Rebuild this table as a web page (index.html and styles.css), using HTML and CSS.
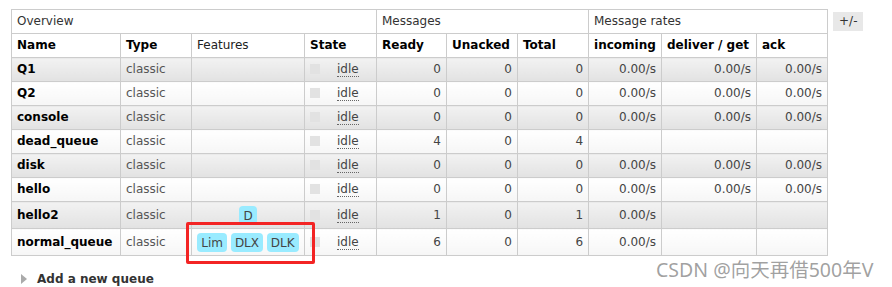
FILE: index.html
```html
<!DOCTYPE html>
<html>
<head>
<meta charset="utf-8">
<link rel="stylesheet" href="styles.css">
</head>
<body>
<div class="page">
  <div class="top">
    <table class="queues">
      <colgroup>
        <col class="c-name"><col class="c-type"><col class="c-feat"><col class="c-state">
        <col class="c-num"><col class="c-num2"><col class="c-num2">
        <col class="c-in"><col class="c-del"><col class="c-ack">
      </colgroup>
      <thead>
        <tr class="group">
          <th colspan="4">Overview</th>
          <th colspan="3">Messages</th>
          <th colspan="3">Message rates</th>
        </tr>
        <tr class="cols">
          <th>Name</th><th>Type</th><th class="light">Features</th><th>State</th>
          <th>Ready</th><th>Unacked</th><th>Total</th>
          <th>incoming</th><th>deliver / get</th><th>ack</th>
        </tr>
      </thead>
      <tbody>
        <tr class="alt1">
          <td class="name">Q1</td><td>classic</td><td></td>
          <td class="state"><span class="sq"></span><abbr>idle</abbr></td>
          <td class="r">0</td><td class="r">0</td><td class="r">0</td>
          <td class="r">0.00/s</td><td class="r">0.00/s</td><td class="r">0.00/s</td>
        </tr>
        <tr class="alt2">
          <td class="name">Q2</td><td>classic</td><td></td>
          <td class="state"><span class="sq"></span><abbr>idle</abbr></td>
          <td class="r">0</td><td class="r">0</td><td class="r">0</td>
          <td class="r">0.00/s</td><td class="r">0.00/s</td><td class="r">0.00/s</td>
        </tr>
        <tr class="alt1">
          <td class="name">console</td><td>classic</td><td></td>
          <td class="state"><span class="sq"></span><abbr>idle</abbr></td>
          <td class="r">0</td><td class="r">0</td><td class="r">0</td>
          <td class="r">0.00/s</td><td class="r">0.00/s</td><td class="r">0.00/s</td>
        </tr>
        <tr class="alt2">
          <td class="name">dead_queue</td><td>classic</td><td></td>
          <td class="state"><span class="sq"></span><abbr>idle</abbr></td>
          <td class="r">4</td><td class="r">0</td><td class="r">4</td>
          <td></td><td></td><td></td>
        </tr>
        <tr class="alt1">
          <td class="name">disk</td><td>classic</td><td></td>
          <td class="state"><span class="sq"></span><abbr>idle</abbr></td>
          <td class="r">0</td><td class="r">0</td><td class="r">0</td>
          <td class="r">0.00/s</td><td class="r">0.00/s</td><td class="r">0.00/s</td>
        </tr>
        <tr class="alt2">
          <td class="name">hello</td><td>classic</td><td></td>
          <td class="state"><span class="sq"></span><abbr>idle</abbr></td>
          <td class="r">0</td><td class="r">0</td><td class="r">0</td>
          <td class="r">0.00/s</td><td class="r">0.00/s</td><td class="r">0.00/s</td>
        </tr>
        <tr class="alt1 tall">
          <td class="name">hello2</td><td>classic</td>
          <td class="feat"><abbr class="badge">D</abbr></td>
          <td class="state"><span class="sq"></span><abbr>idle</abbr></td>
          <td class="r">1</td><td class="r">0</td><td class="r">1</td>
          <td class="r">0.00/s</td><td></td><td></td>
        </tr>
        <tr class="alt2 tall">
          <td class="name">normal_queue</td><td>classic</td>
          <td class="feat"><abbr class="badge">Lim</abbr> <abbr class="badge">DLX</abbr> <abbr class="badge">DLK</abbr></td>
          <td class="state"><span class="sq"></span><abbr>idle</abbr></td>
          <td class="r">6</td><td class="r">0</td><td class="r">6</td>
          <td class="r">0.00/s</td><td></td><td></td>
        </tr>
      </tbody>
    </table>
    <span class="toggle">+/-</span>
  </div>
  <div class="add"><span class="tri"></span>Add a new queue</div>
</div>
<div class="redbox"></div>
<div class="watermark">CSDN @向天再借500年V</div>
</body>
</html>
```
FILE: styles.css
```css
html, body {
  margin: 0;
  padding: 0;
  background: #fff;
}
body {
  font-family: "DejaVu Sans", Verdana, sans-serif;
  font-size: 12px;
  color: #444;
  width: 892px;
  height: 287px;
  overflow: hidden;
  position: relative;
}
.page {
  padding: 9px 0 0 11px;
}
.top {
  display: flex;
  align-items: flex-start;
}
.queues {
  border-collapse: collapse;
  table-layout: fixed;
  width: 817px;
}
.c-name { width: 109px; }
.c-type { width: 71px; }
.c-feat { width: 113px; }
.c-state { width: 72px; }
.c-num { width: 70px; }
.c-num2 { width: 71px; }
.c-in { width: 73px; }
.c-del { width: 95px; }
.c-ack { width: 71px; }

.queues th, .queues td {
  border: 1px solid #ccc;
  padding: 3px 5px;
  line-height: 17px;
  text-align: left;
  white-space: nowrap;
  overflow: hidden;
}
.queues th {
  color: #000;
  font-weight: bold;
  background: #fff;
}
.queues tr.group th {
  font-weight: normal;
  color: #333;
}
.queues th.light {
  font-weight: normal;
  color: #222;
}
.queues td { color: #555; }
.queues td.name { color: #000; font-weight: bold; }
.queues td.r { text-align: right; color: #444; }
.alt1 td { background: linear-gradient(#f2f2f2, #e2e2e2); }
.alt2 td { background: linear-gradient(#fff, #f6f6f6); }
.tall td { height: 20px; }

.state abbr {
  text-decoration: none;
  border-bottom: 1px dotted #666;
  color: #444;
}
.sq {
  display: inline-block;
  width: 10px;
  height: 10px;
  background: #e2e2e2;
  margin-right: 17px;
  vertical-align: -1px;
}
.feat { text-align: center !important; }
.badge {
  display: inline-block;
  background: #99ebff;
  color: #444;
  text-decoration: none;
  border-radius: 4px;
  padding: 2px 4px 1px 4px;
  line-height: 16px;
}

.toggle {
  display: inline-block;
  margin: 3px 0 0 5px;
  background: #e8e8e8;
  color: #333;
  padding: 1px 6px 2px 6px;
  line-height: 16px;
}

.add {
  margin: 16px 0 0 10px;
  font-weight: bold;
  color: #333;
  display: flex;
  align-items: center;
  gap: 10px;
  line-height: 14px;
}
.tri {
  width: 0;
  height: 0;
  border-top: 5px solid transparent;
  border-bottom: 5px solid transparent;
  border-left: 6px solid #aaa;
}

.redbox {
  position: absolute;
  left: 186px;
  top: 222px;
  width: 123px;
  height: 36px;
  border: 3px solid #f32424;
  border-radius: 2px;
}
.watermark {
  position: absolute;
  left: 656px;
  top: 254px;
  font-family: "Noto Sans", "Noto Sans CJK SC", sans-serif;
  font-size: 19.5px;
  color: rgba(130, 130, 130, 0.75);
  white-space: nowrap;
}
```
